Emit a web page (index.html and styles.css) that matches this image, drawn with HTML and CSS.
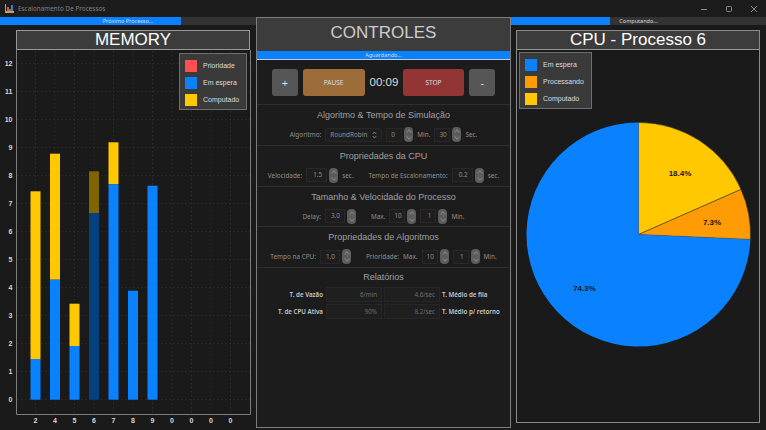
FILE: index.html
```html
<!DOCTYPE html>
<html>
<head>
<meta charset="utf-8">
<title>Escalonamento De Processos</title>
<link rel="stylesheet" href="styles.css">
</head>
<body>
<div class="janela">

<div class="titlebar">
  <svg class="app-icon" width="9" height="9" viewBox="0 0 9 9">
    <rect x="0" y="0" width="1" height="9" fill="#c9a24a"/>
    <rect x="1" y="7" width="8" height="2" fill="#c9a24a"/>
    <rect x="2" y="3" width="2" height="4" fill="#e0553a"/>
    <rect x="4" y="5" width="2" height="2" fill="#3f7fd0"/>
    <rect x="6" y="1" width="2" height="6" fill="#4a78b8"/>
  </svg>
  <span class="app-title">Escalonamento De Processos</span>
  <div class="win-btns">
    <svg width="8" height="8" viewBox="0 0 8 8"><path d="M1 4.5h6" stroke="#8a8a8a" fill="none"/></svg>
    <svg width="8" height="8" viewBox="0 0 8 8"><rect x="1.5" y="1.5" width="5" height="5" rx="1" stroke="#8a8a8a" fill="none"/></svg>
    <svg width="8" height="8" viewBox="0 0 8 8"><path d="M1 1l6 6M7 1l-6 6" stroke="#8a8a8a" fill="none"/></svg>
  </div>
</div>

<div class="main">

  <div class="col-left">
    <div class="progress"><div class="progress-fill" style="width:181px"></div><span>Próximo Processo...</span></div>
    <div class="panel-title mem-title">MEMORY</div>
    <div class="chart">
      <svg width="256" height="381" viewBox="0 49 256 381">
        <g class="grid">
          <path d="M17 62.7H250M17 90.7H250M17 118.7H250M17 146.7H250M17 174.7H250M17 202.7H250M17 230.7H250M17 258.7H250M17 286.7H250M17 314.7H250M17 342.7H250M17 370.7H250M17 398.7H250"/>
          <path d="M35.5 50V413M55 50V413M74.5 50V413M94 50V413M113.5 50V413M133 50V413M152.5 50V413M172 50V413M191.5 50V413M211 50V413M230.5 50V413"/>
        </g>
        <path class="frame" d="M16.5 49V413.5H250.5V49"/>

        <rect x="30.5" y="190.3" width="10" height="168" fill="#ffc800"/>
        <rect x="30.5" y="358" width="10" height="40.7" fill="#0a82ff"/>
        <rect x="50" y="152.7" width="10" height="126" fill="#ffc800"/>
        <rect x="50" y="278.7" width="10" height="120" fill="#0a82ff"/>
        <rect x="69.5" y="302.7" width="10" height="42.3" fill="#ffc800"/>
        <rect x="69.5" y="345" width="10" height="53.7" fill="#0a82ff"/>
        <rect x="89" y="170.3" width="10" height="41.7" fill="#806400"/>
        <rect x="89" y="212" width="10" height="186.7" fill="#054180"/>
        <rect x="108.5" y="141.3" width="10" height="42" fill="#ffc800"/>
        <rect x="108.5" y="183.3" width="10" height="215.4" fill="#0a82ff"/>
        <rect x="128" y="289.7" width="10" height="109" fill="#0a82ff"/>
        <rect x="147.5" y="184.7" width="10" height="214" fill="#0a82ff"/>

        <g class="y-labels">
          <text x="12.5" y="65.3">12</text>
          <text x="12.5" y="93.3">11</text>
          <text x="12.5" y="121.3">10</text>
          <text x="12.5" y="149.3">9</text>
          <text x="12.5" y="177.3">8</text>
          <text x="12.5" y="205.3">7</text>
          <text x="12.5" y="233.3">6</text>
          <text x="12.5" y="261.3">5</text>
          <text x="12.5" y="289.3">4</text>
          <text x="12.5" y="317.3">3</text>
          <text x="12.5" y="345.3">2</text>
          <text x="12.5" y="373.3">1</text>
          <text x="12.5" y="401.3">0</text>
        </g>
        <g class="x-labels">
          <text x="35.5" y="422">2</text>
          <text x="55" y="422">4</text>
          <text x="74.5" y="422">5</text>
          <text x="94" y="422">6</text>
          <text x="113.5" y="422">7</text>
          <text x="133" y="422">8</text>
          <text x="152.5" y="422">9</text>
          <text x="172" y="422">0</text>
          <text x="191.5" y="422">0</text>
          <text x="211" y="422">0</text>
          <text x="230.5" y="422">0</text>
        </g>
      </svg>
      <div class="legend legend-mem">
        <div class="legend-item"><i class="sw sw-red"></i>Prioridade</div>
        <div class="legend-item"><i class="sw sw-blue"></i>Em espera</div>
        <div class="legend-item"><i class="sw sw-yellow"></i>Computado</div>
      </div>
    </div>
  </div>

  <div class="col-center">
    <div class="ctrl-title">CONTROLES</div>
    <div class="progress progress-center"><div class="progress-fill" style="width:100%"></div><span>Aguardando...</span></div>

    <div class="btn-row">
      <div class="btn btn-small">+</div>
      <div class="btn btn-pause">PAUSE</div>
      <div class="timer">00:09</div>
      <div class="btn btn-stop">STOP</div>
      <div class="btn btn-small">-</div>
    </div>

    <div class="secao">
      <div class="secao-titulo">Algoritmo &amp; Tempo de Simulação</div>
      <div class="linha">
        <span>Algoritmo:</span>
        <div class="select">RoundRobin<svg width="5" height="8" viewBox="0 0 5 8"><path d="M.7 3L2.5 1l1.8 2M.7 5l1.8 2 1.8-2" stroke="#999" fill="none" stroke-width=".8"/></svg></div>
        <div class="spin"><div class="box w15 esq">0</div><div class="seta"></div></div>
        <span>Min.</span>
        <div class="spin"><div class="box w15 esq">30</div><div class="seta"></div></div>
        <span>Sec.</span>
      </div>
    </div>

    <div class="secao">
      <div class="secao-titulo">Propriedades da CPU</div>
      <div class="linha">
        <span>Velocidade:</span>
        <div class="spin"><div class="box w21">1.5</div><div class="seta"></div></div>
        <span>sec.</span>
        <span class="grupo">Tempo de Escalonamento:</span>
        <div class="spin"><div class="box w21">0.2</div><div class="seta"></div></div>
        <span>sec.</span>
      </div>
    </div>

    <div class="secao">
      <div class="secao-titulo">Tamanho &amp; Velocidade do Processo</div>
      <div class="linha">
        <span>Delay:</span>
        <div class="spin"><div class="box w20">3.0</div><div class="seta"></div></div>
        <span class="grupo">Max.</span>
        <div class="spin"><div class="box w16">10</div><div class="seta"></div></div>
        <div class="spin"><div class="box w16">1</div><div class="seta"></div></div>
        <span>Min.</span>
      </div>
    </div>

    <div class="secao">
      <div class="secao-titulo">Propriedades de Algoritmos</div>
      <div class="linha">
        <span>Tempo na CPU:</span>
        <div class="spin"><div class="box w20">1.0</div><div class="seta"></div></div>
        <span class="grupo">Prioridade:</span>
        <span>Max.</span>
        <div class="spin"><div class="box w16">10</div><div class="seta"></div></div>
        <div class="spin"><div class="box w16">1</div><div class="seta"></div></div>
        <span>Min.</span>
      </div>
    </div>

    <div class="relatorios">
      <div class="rel-titulo">Relatórios</div>
      <div class="rel-grid">
        <div class="rel-label dir">T. de Vazão</div>
        <div class="rel-val">6/min</div>
        <div class="rel-val">4.6/sec</div>
        <div class="rel-label">T. Médio de fila</div>
        <div class="rel-label dir">T. de CPU Ativa</div>
        <div class="rel-val">90%</div>
        <div class="rel-val">8.2/sec</div>
        <div class="rel-label">T. Médio p/ retorno</div>
      </div>
    </div>
  </div>

  <div class="col-right">
    <div class="progress"><div class="progress-fill" style="width:99px"></div><span>Computando...</span></div>
    <div class="cpu-panel">
      <div class="panel-title cpu-title">CPU - Processo 6</div>
      <div class="chart">
        <svg width="243" height="372" viewBox="517 50 243 372">
          <path d="M638.5 234.5V122.5A112 112 0 0 1 741 189.4Z" fill="#ffc800" stroke="#3a3420" stroke-width=".5"/>
          <path d="M638.5 234.5L741 189.4A112 112 0 0 1 750.4 239.4Z" fill="#ff9b05" stroke="#3a3420" stroke-width=".5"/>
          <path d="M638.5 234.5L750.4 239.4A112 112 0 1 1 638.5 122.5Z" fill="#0a82ff"/>
          <g class="pie-labels">
            <text x="680" y="175.5">18.4%</text>
            <text x="712" y="224.5">7.3%</text>
            <text x="584.5" y="291">74.3%</text>
          </g>
        </svg>
        <div class="legend legend-cpu">
          <div class="legend-item"><i class="sw sw-blue"></i>Em espera</div>
          <div class="legend-item"><i class="sw sw-orange"></i>Processando</div>
          <div class="legend-item"><i class="sw sw-yellow"></i>Computado</div>
        </div>
      </div>
    </div>
  </div>

</div>
</div>
</body>
</html>
```

FILE: styles.css
```css
*{
box-sizing:border-box;
}
html,body{
margin:0;
padding:0;
}
body{
background:#1a1a1a;
font-family:"Liberation Sans",Arial,sans-serif;
overflow:hidden;
}
.janela{
width:766px;
height:430px;
display:flex;
flex-direction:column;
}

/* barra de titulo */
.titlebar{
height:17px;
display:flex;
align-items:center;
padding-left:5px;
background:#1c1c1c;
}
.app-title{
margin-left:4px;
font-size:6.2px;
letter-spacing:.1px;
color:#858585;
font-family:"Noto Sans",sans-serif;
}
.win-btns{
margin-left:auto;
display:flex;
gap:17px;
padding-right:8.5px;
}

.main{
height:413px;
display:flex;
}
.col-left{
width:256px;
}
.col-center{
width:255px;
height:411px;
border:1px solid #7d7d7d;
background:#1c1c1c;
}
.col-right{
width:255px;
}

/* barras de progresso */
.progress{
position:relative;
height:8px;
background:#333;
text-align:center;
}
.progress-fill{
position:absolute;
top:0;
left:0;
height:100%;
background:#0a82ff;
}
.progress span{
position:relative;
display:block;
font-size:5.5px;
line-height:8px;
color:#ddd;
font-family:"Noto Sans",sans-serif;
}
.progress-center{
border-bottom:1px solid #ccc;
height:9px;
}

/* paineis */
.panel-title{
height:20px;
line-height:17px;
font-size:17px;
text-align:center;
color:#fff;
background:#3c3c3c;
border:1px solid #999;
}
.mem-title{
margin:5px 6px 0 16px;
}
.chart{
position:relative;
}
.chart svg{
display:block;
}
.cpu-panel{
margin:5px 6px 0 5px;
height:393px;
border:1px solid #8a8a8a;
}
.cpu-title{
border-width:0 0 1px 0;
height:19px;
}
.grid path{
fill:none;
stroke:#333;
stroke-width:.8;
stroke-dasharray:1.5 2.5;
}
.frame{
fill:none;
stroke:#7d7d7d;
stroke-width:1;
}
.y-labels text{
font-size:7px;
font-weight:bold;
fill:#d8d8d8;
text-anchor:end;
}
.x-labels text{
font-size:7px;
font-weight:bold;
fill:#d8d8d8;
text-anchor:middle;
}
.pie-labels text{
font-size:8px;
font-weight:bold;
fill:#1a1a1a;
text-anchor:middle;
}

/* legendas */
.legend{
position:absolute;
width:68px;
height:57px;
padding:3px 0 0 5px;
background:#3a3a3a;
border:1px solid #6e6e6e;
font-size:7px;
color:#ddd;
}
.legend-mem{
top:3px;
left:179px;
}
.legend-cpu{
top:2px;
left:2px;
width:73px;
}
.legend-item{
height:17px;
display:flex;
align-items:center;
}
.sw{
width:12px;
height:12px;
margin-right:6px;
}
.sw-red{background:#ff4f50;}
.sw-blue{background:#0a82ff;}
.sw-yellow{background:#ffc800;}
.sw-orange{background:#ff9b05;}

/* controles */
.ctrl-title{
height:33px;
line-height:29px;
font-size:17px;
text-align:center;
color:#ccc;
background:#3c3c3c;
}
.btn-row{
height:45px;
padding:9px 15px 0 15px;
display:flex;
gap:5px;
border-bottom:1px solid #2e2e2e;
}
.btn{
height:27px;
border-radius:3px;
text-align:center;
line-height:27px;
color:#ddd;
font-size:6.5px;
font-family:"Noto Sans",sans-serif;
}
.btn-small{
width:26px;
background:#565656;
font-size:11px;
}
.btn-pause{
width:63px;
background:#9c6d38;
}
.btn-stop{
width:63px;
background:#943535;
}
.timer{
width:28px;
line-height:27px;
font-size:11.5px;
color:#ddd;
text-align:center;
}
.secao{
height:40.75px;
border-bottom:1px solid #2e2e2e;
}
.secao-titulo{
height:20px;
line-height:20px;
font-size:9px;
text-align:center;
color:#a0a0a0;
}
.linha{
display:flex;
justify-content:center;
align-items:center;
gap:4px;
height:17px;
margin-top:1px;
font-size:6.4px;
color:#8f8f8f;
font-family:"Noto Sans",sans-serif;
}
.grupo{
margin-left:11px;
}
.select{
width:57px;
height:14px;
padding:0 4px;
display:flex;
align-items:center;
justify-content:space-between;
border:1px solid #282828;
border-radius:3px;
background:#1e1e1e;
}
.spin{
display:flex;
align-items:center;
gap:2px;
}
.box{
height:14px;
line-height:12px;
padding:0 4px;
text-align:right;
border:1px solid #282828;
background:#1e1e1e;
}
.esq{
text-align:left;
}
.w15{width:16px;}
.w16{width:16px;}
.w20{width:20px;}
.w21{width:21px;}
.seta{
position:relative;
width:9px;
height:15px;
border-radius:4px;
background:#5c5c5c;
}
.seta::before,.seta::after{
content:"";
position:absolute;
left:3px;
width:3px;
height:3px;
border-left:1px solid #808080;
border-top:1px solid #808080;
}
.seta::before{
top:3px;
transform:rotate(45deg);
}
.seta::after{
bottom:3px;
transform:rotate(225deg);
}

/* relatorios */
.rel-titulo{
height:19px;
line-height:19px;
font-size:9px;
text-align:center;
color:#a0a0a0;
}
.rel-grid{
display:grid;
grid-template-columns:67px 56px 56px 1fr;
grid-auto-rows:15px;
gap:2px;
font-family:"Noto Sans",sans-serif;
font-size:6.2px;
}
.rel-label{
line-height:15px;
color:#c8c8c8;
font-weight:600;
white-space:nowrap;
}
.dir{
padding-right:1px;
text-align:right;
}
.rel-val{
line-height:13px;
padding-right:4px;
text-align:right;
color:#6e6e6e;
background:#1f1f1f;
border:1px solid #262626;
}
```
